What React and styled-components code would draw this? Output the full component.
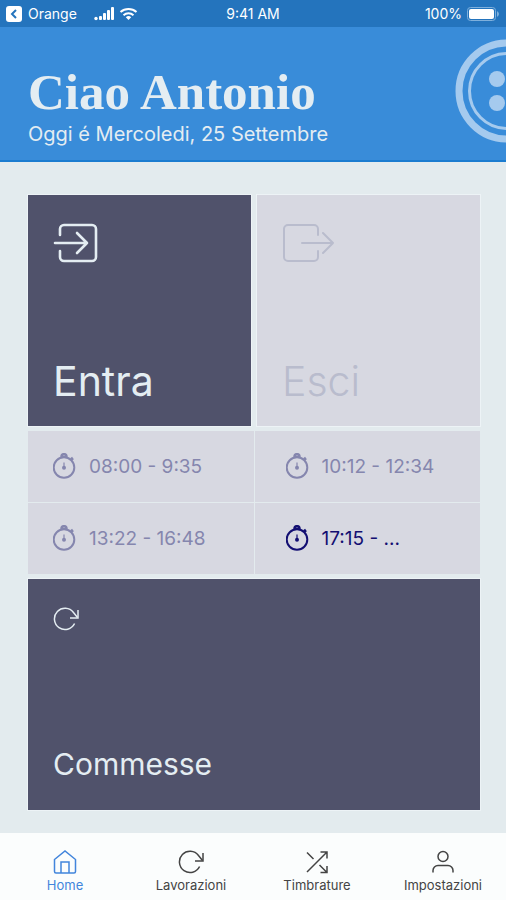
import React from 'react';
import styled, { createGlobalStyle, ThemeProvider } from 'styled-components';

const theme = {
  sans: `Inter, 'Liberation Sans', sans-serif`,
  serif: `'Liberation Serif', serif`,
  statusBar: '#2474bd',
  header: '#398cd9',
  headerLine: '#1b7cd0',
  page: '#e3ebee',
  dark: '#50526b',
  light: '#d7d8e1',
  edge: '#edf3f6',
  paleText: '#e4edf2',
  muted: '#b9bccd',
  slot: '#8586ae',
  active: '#130f72',
  nav: '#fbfdfd',
  navText: '#444444',
  emphasis: '#4285dc',
};

const slots = [
  { time: '08:00 - 9:35' },
  { time: '10:12 - 12:34' },
  { time: '13:22 - 16:48' },
  { time: '17:15 - ...', active: true },
];

const EnterIcon = () => (
  <StActionIcon viewBox="0 0 52 40" $weight="2.6" aria-hidden="true">
    <path d="M7 12V6a4 4 0 0 1 4-4h28a4 4 0 0 1 4 4v28a4 4 0 0 1-4 4H11a4 4 0 0 1-4-4v-6" />
    <path d="M2 20h32M24 10l10 10-10 10" />
  </StActionIcon>
);

const ExitIcon = () => (
  <StActionIcon viewBox="0 0 52 40" $weight="2" aria-hidden="true">
    <path d="M36 12V6a4 4 0 0 0-4-4H6a4 4 0 0 0-4 4v28a4 4 0 0 0 4 4h26a4 4 0 0 0 4-4v-6" />
    <path d="M20 20h31M41 10l10 10-10 10" />
  </StActionIcon>
);

const StopwatchIcon = () => (
  <StSlotIcon viewBox="0 0 24 28" aria-hidden="true">
    <circle cx="11" cy="14.5" r="10.3" />
    <path d="M8.3 3.6a2.700 2.700 0 0 1 5.400 0z" />
    <path d="M18 6.500l2-1.500" strokeWidth="3" />
    <path d="M11 9.500v5" strokeWidth="1.2" />
    <circle cx="11" cy="14.8" r="2" fill="currentColor" stroke="none" />
  </StSlotIcon>
);

const RefreshIcon = () => (
  <StIcon viewBox="0 0 26 24" aria-hidden="true">
    <path d="M21.6 16.5A10.6 10.6 0 1 1 20.5 5.5l4 5" />
    <path d="M25 3v8h-8" />
  </StIcon>
);

const HomeIcon = () => (
  <StIcon viewBox="0 0 26 24" aria-hidden="true">
    <path d="M2.5 9.5L13 1l10.5 8.5v12a1.5 1.5 0 0 1-1.5 1.5H4a1.5 1.5 0 0 1-1.5-1.5z" />
    <path d="M9 23V12h8v11" />
  </StIcon>
);

const ShuffleIcon = () => (
  <StIcon viewBox="0 0 26 24" aria-hidden="true">
    <path d="M3 22L23 2M16.5 2H23v6.5M3 2.5L9.5 9M15.5 15l7.5 7.5M23 16v6.5h-6.5" />
  </StIcon>
);

const UserIcon = () => (
  <StIcon viewBox="0 0 26 24" aria-hidden="true">
    <circle cx="13" cy="6.5" r="5" />
    <path d="M3 22.5v-2a5 5 0 0 1 5-5h10a5 5 0 0 1 5 5v2" />
  </StIcon>
);

const StatusBar = () => (
  <StStatusBar>
    <StStatusGroup>
      <StBack type="button">
        <svg width="16" height="16" viewBox="0 0 16 16" aria-hidden="true">
          <rect width="16" height="16" rx="3" fill="#fff" />
          <path d="M10 4L6 8l4 4" fill="none" stroke="#2474bd" strokeWidth="2" />
        </svg>
        Orange
      </StBack>
      <svg width="44" height="14" viewBox="0 0 44 14" fill="#fff" aria-hidden="true">
        <circle cx="2" cy="11.5" r="1.7" />
        <rect x="5" y="9" width="3" height="4" rx="1" />
        <rect x="9" y="6" width="3" height="7" rx="1" />
        <rect x="13" y="3" width="3" height="10" rx="1" />
        <rect x="17" y="0" width="3" height="13" rx="1" />
        <g fill="none" stroke="#fff" strokeWidth="2">
          <path d="M26.5 5a12 12 0 0 1 16 0" />
          <path d="M29.5 8.2a7.5 7.5 0 0 1 10 0" />
        </g>
        <path d="M31.8 10.2a4.2 4.2 0 0 1 5.4 0L34.5 13z" />
      </svg>
    </StStatusGroup>
    <span>9:41 AM</span>
    <StStatusGroup $end>
      100%
      <svg width="33" height="14" viewBox="0 0 33 14" aria-hidden="true">
        <rect x="0.5" y="0.5" width="28" height="13" rx="3" fill="none" stroke="#7fb0dc" />
        <rect x="2" y="2" width="25" height="10" rx="2" fill="#fff" />
        <path d="M30 4q4 3 0 6z" fill="#7fb0dc" />
      </svg>
    </StStatusGroup>
  </StStatusBar>
);

const App = () => (
  <ThemeProvider theme={theme}>
    <GlobalStyle />
    <StPage>
      <StatusBar />
      <StHeader>
        <StGreeting>Ciao Antonio</StGreeting>
        <StDate>Oggi é Mercoledi, 25 Settembre</StDate>
        <StLogo viewBox="0 0 104 104" aria-hidden="true">
          <circle cx="52" cy="52" r="48" strokeWidth="7" />
          <circle cx="52" cy="52" r="37.5" strokeWidth="3" />
          <g fill="currentColor" stroke="none">
            <circle cx="42" cy="40" r="8" />
            <circle cx="42" cy="64" r="8" />
            <circle cx="66" cy="40" r="8" />
            <circle cx="66" cy="64" r="8" />
          </g>
        </StLogo>
      </StHeader>
      <StMain>
        <StActions>
          <StTile type="button">
            <EnterIcon />
            <StTileTitle>Entra</StTileTitle>
          </StTile>
          <StTile type="button" disabled>
            <ExitIcon />
            <StTileTitle>Esci</StTileTitle>
          </StTile>
        </StActions>
        <StSlots>
          {slots.map(({ time, active }) => (
            <StSlot key={time} $active={active}>
              <StopwatchIcon />
              {time}
            </StSlot>
          ))}
        </StSlots>
        <StTile type="button">
          <RefreshIcon />
          <StTileTitle $small>Commesse</StTileTitle>
        </StTile>
      </StMain>
      <StNav>
        <StNavLink href="#home" $active>
          <HomeIcon />
          Home
        </StNavLink>
        <StNavLink href="#lavorazioni">
          <RefreshIcon />
          Lavorazioni
        </StNavLink>
        <StNavLink href="#timbrature">
          <ShuffleIcon />
          Timbrature
        </StNavLink>
        <StNavLink href="#impostazioni">
          <UserIcon />
          Impostazioni
        </StNavLink>
      </StNav>
    </StPage>
  </ThemeProvider>
);

const GlobalStyle = createGlobalStyle`
  * {
    box-sizing: border-box;
  }
  body {
    margin: 0;
    font-family: ${theme.sans};
    background: ${theme.page};
  }
  button {
    font: inherit;
    color: inherit;
    border: 0;
    cursor: pointer;
  }
  h1, p, ul {
    margin: 0;
    padding: 0;
  }
`;

const StPage = styled.div`
  display: flex;
  flex-direction: column;
  min-height: 100vh;
`;

const StStatusBar = styled.div`
  display: grid;
  grid-template-columns: 1fr auto 1fr;
  align-items: center;
  height: 27px;
  padding: 0 6px;
  color: #ffffff;
  font-size: 14px;
  background: ${({ theme }) => theme.statusBar};
`;

const StStatusGroup = styled.div`
  display: flex;
  align-items: center;
  justify-content: ${({ $end }) => ($end ? 'flex-end' : 'flex-start')};
  gap: ${({ $end }) => ($end ? '5px' : '17px')};
`;

const StBack = styled.button`
  display: flex;
  align-items: center;
  gap: 6px;
  padding: 0;
  background: none;
`;

const StHeader = styled.header`
  position: relative;
  padding: 37px 28px 11px;
  overflow: hidden;
  color: ${({ theme }) => theme.paleText};
  background: ${({ theme }) => theme.header};
  border-bottom: 2px solid ${({ theme }) => theme.headerLine};
`;

const StGreeting = styled.h1`
  font-family: ${({ theme }) => theme.serif};
  font-size: 51px;
  font-weight: 700;
  line-height: 56px;
`;

const StDate = styled.p`
  font-size: 20px;
  line-height: 29px;
  margin-top: 0;
`;

/* the button logo runs off the right edge of the header */
const StLogo = styled.svg`
  position: absolute;
  top: 12px;
  right: -53px;
  width: 104px;
  height: 104px;
  color: #a5caee;
  fill: none;
  stroke: currentColor;
`;

const StMain = styled.main`
  flex: 1;
  display: flex;
  flex-direction: column;
  gap: 5px;
  padding: 33px 26px 23px 28px;
`;

const StActions = styled.div`
  display: grid;
  grid-template-columns: 1fr 1fr;
  gap: 6px;
`;

const StTile = styled.button`
  display: flex;
  flex-direction: column;
  align-items: flex-start;
  justify-content: space-between;
  min-height: 231px;
  padding: 28px 25px;
  color: ${({ theme }) => theme.paleText};
  text-align: left;
  background: ${({ theme }) => theme.dark};
  box-shadow: 0 0 0 1px ${({ theme }) => theme.edge};

  &:disabled {
    color: ${({ theme }) => theme.muted};
    background: ${({ theme }) => theme.light};
    cursor: default;
  }
`;

const StTileTitle = styled.span`
  font-size: ${({ $small }) => ($small ? '30px' : '41px')};
  font-weight: 400;
  line-height: ${({ $small }) => ($small ? '36px' : '34px')};

  ${StTile}:disabled & {
    font-weight: 300;
  }
`;

const StActionIcon = styled.svg`
  width: 52px;
  height: 40px;
  fill: none;
  stroke: currentColor;
  stroke-width: ${({ $weight }) => $weight};
  stroke-linecap: round;
  stroke-linejoin: round;
`;

const StIcon = styled.svg`
  width: 26px;
  height: 24px;
  fill: none;
  stroke: currentColor;
  stroke-width: 1.5;
`;

const StSlots = styled.ul`
  display: grid;
  grid-template-columns: 1fr 1fr;
  gap: 1px;
  list-style: none;
`;

const StSlot = styled.li`
  display: flex;
  align-items: center;
  gap: 12px;
  height: 71px;
  padding: 0 25px;
  color: ${({ theme, $active }) => ($active ? theme.active : theme.slot)};
  font-size: 19px;
  background: ${({ theme }) => theme.light};

  &:nth-child(even) {
    padding-left: 31px;
  }
`;

const StSlotIcon = styled.svg`
  width: 24px;
  height: 28px;
  fill: none;
  stroke: currentColor;
  stroke-width: 2;
`;

const StNav = styled.nav`
  display: grid;
  grid-template-columns: repeat(4, 1fr);
  min-height: 67px;
  padding: 17px 0 0 2px;
  background: ${({ theme }) => theme.nav};
`;

const StNavLink = styled.a`
  display: flex;
  flex-direction: column;
  align-items: center;
  gap: 3px;
  color: ${({ theme, $active }) => ($active ? theme.emphasis : theme.navText)};
  font-size: 13px;
  line-height: 16px;
  text-decoration: none;

  &:hover {
    color: ${({ theme }) => theme.emphasis};
  }
`;

export default App;
